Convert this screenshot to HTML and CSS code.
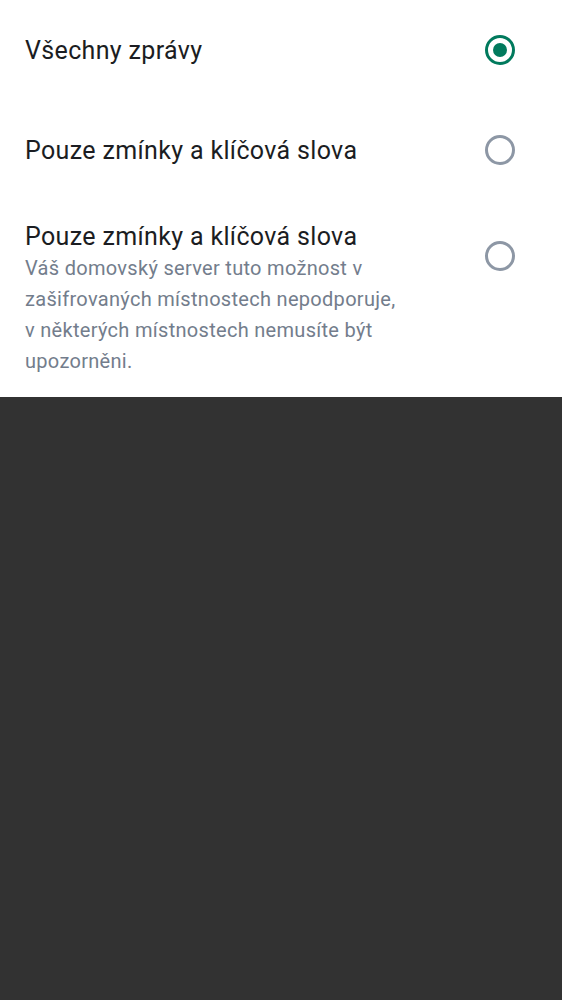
FILE: index.html
```html
<!DOCTYPE html>
<html lang="cs">
<head>
<meta charset="utf-8">
<link rel="stylesheet" href="styles.css">
</head>
<body>
<div class="sheet">
  <div class="option option-single">
    <div class="texts"><div class="title">Všechny zprávy</div></div>
    <span class="radio checked"></span>
  </div>
  <div class="option option-single">
    <div class="texts"><div class="title">Pouze zmínky a klíčová slova</div></div>
    <span class="radio"></span>
  </div>
  <div class="option option-multi">
    <div class="texts">
      <div class="title">Pouze zmínky a klíčová slova</div>
      <div class="desc">Váš domovský server tuto možnost v zašifrovaných místnostech nepodporuje, v některých místnostech nemusíte být upozorněni.</div>
    </div>
    <span class="radio"></span>
  </div>
</div>
</body>
</html>
```
FILE: styles.css
```css
html, body {
  margin: 0;
  padding: 0;
  height: 100%;
}
body {
  background: #323232;
  font-family: Roboto, "Noto Sans", sans-serif;
}
.sheet {
  background: #ffffff;
}
.option {
  display: flex;
  align-items: center;
  padding: 0 47px 0 25px;
  box-sizing: border-box;
}
.option-single {
  height: 100px;
}
.option-multi {
  padding-top: 20px;
  padding-bottom: 20px;
}
.texts {
  flex: 1;
  max-width: 376px;
}
.title {
  font-size: 25px;
  line-height: 33px;
  color: #1b1d22;
  letter-spacing: 0.35px;
}
.desc {
  font-size: 20px;
  line-height: 31px;
  color: #737d8c;
  letter-spacing: 0.3px;
}
.radio {
  width: 30px;
  height: 30px;
  box-sizing: border-box;
  border: 3px solid #8d97a5;
  border-radius: 50%;
  margin-left: auto;
  flex: none;
  position: relative;
}
.option-multi .radio {
  align-self: flex-start;
  margin-top: 21px;
}
.radio.checked {
  border-color: #017a5d;
}
.radio.checked::after {
  content: "";
  position: absolute;
  left: 50%;
  top: 50%;
  width: 14px;
  height: 14px;
  margin: -7px 0 0 -7px;
  border-radius: 50%;
  background: #017a5d;
}
```
